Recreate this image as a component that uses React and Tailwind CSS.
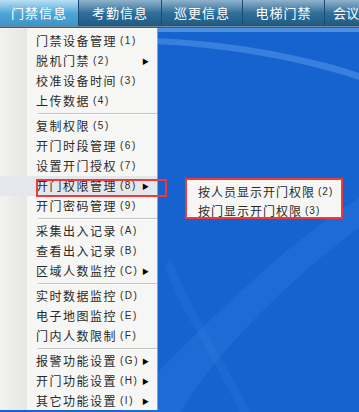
import React from "react";

const tabs = [
  { label: "门禁信息", w: "w-[79px]" },
  { label: "考勤信息", w: "w-[83px]" },
  { label: "巡更信息", w: "w-[81px]" },
  { label: "电梯门禁", w: "w-[82px]" },
];

const groups = [
  [
    { label: "门禁设备管理", key: "1" },
    { label: "脱机门禁", key: "2", sub: true },
    { label: "校准设备时间", key: "3" },
    { label: "上传数据", key: "4" },
  ],
  [
    { label: "复制权限", key: "5" },
    { label: "开门时段管理", key: "6" },
    { label: "设置开门授权", key: "7" },
    { label: "开门权限管理", key: "8", sub: true, active: true },
    { label: "开门密码管理", key: "9" },
  ],
  [
    { label: "采集出入记录", key: "A" },
    { label: "查看出入记录", key: "B" },
    { label: "区域人数监控", key: "C", sub: true },
  ],
  [
    { label: "实时数据监控", key: "D" },
    { label: "电子地图监控", key: "E" },
    { label: "门内人数限制", key: "F" },
  ],
  [
    { label: "报警功能设置", key: "G", sub: true },
    { label: "开门功能设置", key: "H", sub: true },
    { label: "其它功能设置", key: "I", sub: true },
  ],
];

const cjk = { fontFamily: '"Noto Sans CJK SC", "Noto Sans", sans-serif' };
const latin = { fontFamily: '"Liberation Sans", sans-serif' };

function MenuRow({ item }) {
  return (
    <div className={`flex items-center h-[20px] ${item.active ? "bg-[#e4e8ec]" : ""}`}>
      <div className="w-[27px] h-full shrink-0" />
      <div className="flex items-center pl-[9px] text-[12px] leading-none text-[#2a2a2a] tracking-[1.5px]">
        <span>{item.label}</span>
        <span className="ml-[3px] text-[10px] tracking-[1.5px]" style={latin}>
          ({item.key})
        </span>
      </div>
      {item.sub && <span className="ml-auto mr-[8px] text-[7px] text-black">▶</span>}
    </div>
  );
}

export default function App() {
  return (
    <div className="relative w-[359px] h-[412px] overflow-hidden bg-[#1663d0]" style={cjk}>
      {/* top tab bar */}
      <div className="flex h-[27px] bg-gradient-to-b from-[#8fb3cb] via-[#2f6f9a] to-[#1f5a84] border-b border-[#6f8698]">
        {tabs.map((t, i) => (
          <div
            key={t.label}
            className={`${t.w} shrink-0 flex items-center justify-center text-[13px] text-white tracking-[1px] border-r border-[#1b4c70] ${
              i === 0 ? "bg-gradient-to-b from-[#b8e0f4] via-[#4fa7d8] to-[#3b93c8]" : ""
            }`}
          >
            {t.label}
          </div>
        ))}
        <div className="flex-1 min-w-0 flex items-center pl-[8px] text-[13px] text-white whitespace-nowrap overflow-hidden">
          会议
        </div>
      </div>

      {/* blue desktop */}
      <svg className="absolute left-0 top-[28px]" width="359" height="384" viewBox="0 0 359 384">
        <rect x="0" y="0" width="359" height="4" fill="#4b8fe0" />
        <path d="M150 10 C220 12 300 25 359 45 L359 52 C300 32 220 18 150 16 Z" fill="#5a9cec" opacity="0.5" />
        <path d="M120 384 C200 300 280 220 359 170 L359 200 C290 250 220 320 180 384 Z" fill="#2f7ae0" opacity="0.35" />
        <path d="M170 230 C200 300 230 340 250 384 L240 384 C220 340 190 300 165 240 Z" fill="#3b84e4" opacity="0.2" />
      </svg>

      {/* main menu */}
      <div className="absolute left-0 top-[28px] w-[158px] h-[382px] bg-[#f6f6f4] border-r border-[#9aa0a6] pt-[3px]">
        <div className="absolute left-0 top-0 w-[27px] h-full bg-gradient-to-r from-[#f2f2f0] to-[#e6e6e4]" />
        <div className="relative">
          {groups.map((g, gi) => (
            <div key={gi}>
              {gi > 0 && (
                <div className="h-[5px] flex items-center pl-[38px]">
                  <div className="w-full h-[2px] border-t border-[#c4c4c4] border-b border-b-white" />
                </div>
              )}
              {g.map((item) => (
                <MenuRow key={item.key} item={item} />
              ))}
            </div>
          ))}
        </div>
      </div>

      {/* red highlight on active item */}
      <div className="absolute left-[36px] top-[179px] w-[131px] h-[18px] border-2 border-[#ee3a3a]" />

      {/* submenu */}
      <div className="absolute left-[185px] top-[178px] w-[158px] h-[41px] bg-[#f6f6f4] border-2 border-[#ee3a3a] pt-[2px]">
        {[
          { label: "按人员显示开门权限", key: "2" },
          { label: "按门显示开门权限", key: "3" },
        ].map((s) => (
          <div key={s.key} className="flex items-center h-[19px] pl-[11px] text-[12px] text-[#2a2a2a] tracking-[1px]">
            <span>{s.label}</span>
            <span className="ml-[3px] text-[10px]" style={latin}>
              ({s.key})
            </span>
          </div>
        ))}
      </div>
    </div>
  );
}
